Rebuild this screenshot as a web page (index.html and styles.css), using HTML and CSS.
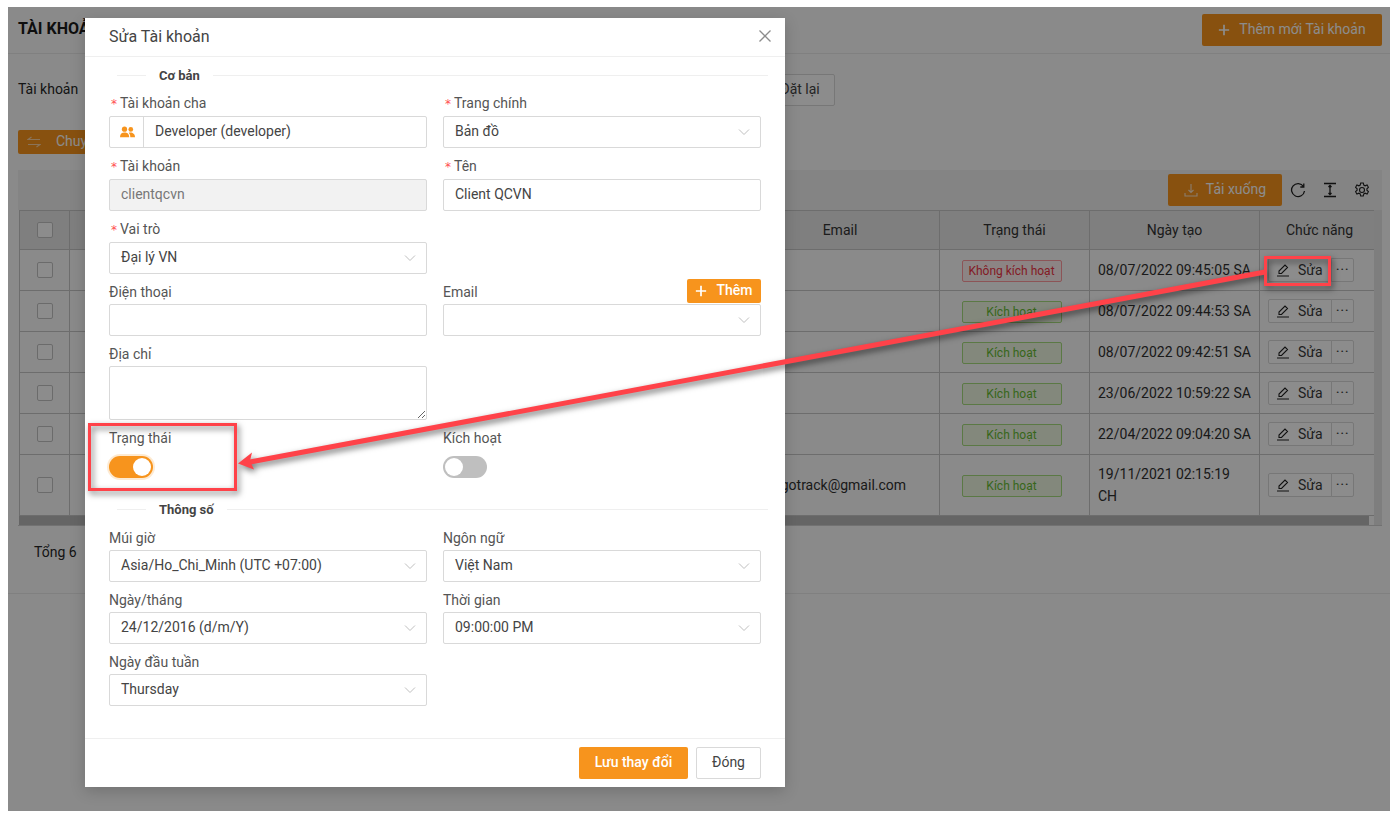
FILE: index.html
```html
<!DOCTYPE html>
<html lang="vi">
<head>
<meta charset="utf-8">
<title>Sửa Tài khoản</title>
<link rel="stylesheet" href="styles.css">
</head>
<body>
<div class="screen">
  <header class="page-head">
    <h1 class="page-title">TÀI KHOẢN</h1>
    <button class="btn btn-primary btn-add"><svg class="ic-plus" viewBox="0 0 14 14"><path d="M7 1v12M1 7h12"/></svg>Thêm mới Tài khoản</button>
  </header>
  <div class="filter">
    <span class="filter-label">Tài khoản</span>
    <span class="filter-input"></span>
    <button class="btn btn-plain btn-reset">Đặt lại</button>
  </div>
  <div class="actions">
    <button class="btn btn-primary btn-move"><svg class="ic-swap" viewBox="0 0 14 12"><path d="M13 3.500H1L4.500 1M1 8.500h12L9.500 11"/></svg>Chuyển</button>
  </div>
  <div class="toolbar">
    <button class="btn btn-primary btn-download"><svg class="ic-down" viewBox="0 0 14 14"><path d="M7 1v8M4.500 7 7 9.500 9.500 7M1 10v3h12v-3"/></svg>Tải xuống</button>
    <svg class="tool" viewBox="0 0 16 16"><path d="M13.500 4.500A6.500 6.500 0 1 0 14.500 9M13.800 1.500v3.500h-3.500"/></svg>
    <svg class="tool" viewBox="0 0 16 16"><path d="M2 1.500h12M2 14.500h12M8 3.500v9M6.500 5 8 3.500 9.500 5M6.500 11 8 12.500 9.500 11"/></svg>
    <svg class="tool tool-gear" viewBox="0 0 16 16"><path d="M6.700 1h2.600l.5 2.100 1.300.7 2-.8 1.300 2.300-1.500 1.500v1.400l1.500 1.500-1.300 2.300-2-.8-1.300.7-.5 2.100H6.700l-.5-2.100-1.300-.7-2 .8-1.300-2.300 1.500-1.500V6.800L1.600 5.300 2.900 3l2 .8 1.300-.7z"/><circle cx="8" cy="8" r="2.500"/></svg>
  </div>
  <div class="table-area">
    <div class="table-main">
      <table class="grid">
        <colgroup><col class="c1"><col class="c2"><col class="c3"><col class="c4"><col class="c5"><col class="c6"></colgroup>
        <thead>
          <tr><th><span class="check"></span></th><th></th><th>Email</th><th>Trạng thái</th><th>Ngày tạo</th><th class="th-act">Chức năng</th></tr>
        </thead>
        <tbody>
          <tr><td class="mid"><span class="check"></span></td><td></td><td></td><td class="mid"><span class="tag tag-off">Không kích hoạt</span></td><td>08/07/2022 09:45:05 SA</td><td class="act"><span class="group"><span class="g-edit"><svg class="ic-pen" viewBox="0 0 14 14"><path d="M1 13h12M3 10.500v-2.500l6-6 2.500 2.500-6 6z"/></svg>Sửa</span><span class="g-more">···</span></span></td></tr>
          <tr><td class="mid"><span class="check"></span></td><td></td><td></td><td class="mid"><span class="tag tag-on">Kích hoạt</span></td><td>08/07/2022 09:44:53 SA</td><td class="act"><span class="group"><span class="g-edit"><svg class="ic-pen" viewBox="0 0 14 14"><path d="M1 13h12M3 10.500v-2.500l6-6 2.500 2.500-6 6z"/></svg>Sửa</span><span class="g-more">···</span></span></td></tr>
          <tr><td class="mid"><span class="check"></span></td><td></td><td></td><td class="mid"><span class="tag tag-on">Kích hoạt</span></td><td>08/07/2022 09:42:51 SA</td><td class="act"><span class="group"><span class="g-edit"><svg class="ic-pen" viewBox="0 0 14 14"><path d="M1 13h12M3 10.500v-2.500l6-6 2.500 2.500-6 6z"/></svg>Sửa</span><span class="g-more">···</span></span></td></tr>
          <tr><td class="mid"><span class="check"></span></td><td></td><td></td><td class="mid"><span class="tag tag-on">Kích hoạt</span></td><td>23/06/2022 10:59:22 SA</td><td class="act"><span class="group"><span class="g-edit"><svg class="ic-pen" viewBox="0 0 14 14"><path d="M1 13h12M3 10.500v-2.500l6-6 2.500 2.500-6 6z"/></svg>Sửa</span><span class="g-more">···</span></span></td></tr>
          <tr><td class="mid"><span class="check"></span></td><td></td><td></td><td class="mid"><span class="tag tag-on">Kích hoạt</span></td><td>22/04/2022 09:04:20 SA</td><td class="act"><span class="group"><span class="g-edit"><svg class="ic-pen" viewBox="0 0 14 14"><path d="M1 13h12M3 10.500v-2.500l6-6 2.500 2.500-6 6z"/></svg>Sửa</span><span class="g-more">···</span></span></td></tr>
          <tr class="tall"><td class="mid"><span class="check"></span></td><td></td><td>dogogotrack@gmail.com</td><td class="mid"><span class="tag tag-on">Kích hoạt</span></td><td>19/11/2021 02:15:19 CH</td><td class="act"><span class="group"><span class="g-edit"><svg class="ic-pen" viewBox="0 0 14 14"><path d="M1 13h12M3 10.500v-2.500l6-6 2.500 2.500-6 6z"/></svg>Sửa</span><span class="g-more">···</span></span></td></tr>
        </tbody>
      </table>
      <div class="hbar"></div>
    </div>
    <div class="vbar"></div>
  </div>
  <div class="total">Tổng 6</div>

  <div class="overlay">
    <section class="modal">
      <div class="modal-head">
        <h2 class="modal-title">Sửa Tài khoản</h2>
        <svg class="ic-close" viewBox="0 0 14 14"><path d="M1.500 1.500l11 11M12.500 1.500l-11 11"/></svg>
      </div>
      <div class="modal-body">
        <div class="legend"><span>Cơ bản</span></div>
        <div class="form">
          <div class="field req"><label class="lab">Tài khoản cha</label>
            <div class="ctl addon"><span class="addon-ic"><svg class="ic-team" viewBox="0 0 16 12"><circle cx="4.800" cy="3" r="2.800"/><circle cx="11.500" cy="3.200" r="2.500"/><path d="M0 11.500c0-3.500 2-5 4.800-5s5 1.500 5 5zM11 11.500c0-2-.5-3.500-1.700-4.700 2.900-1 6.700.3 6.700 4.700z"/></svg></span><span class="addon-text">Developer (developer)</span></div>
          </div>
          <div class="field req"><label class="lab">Trang chính</label>
            <div class="ctl sel">Bản đồ<svg class="chev" viewBox="0 0 12 8"><path d="M1 1.500l5 5 5-5"/></svg></div>
          </div>
          <div class="field req"><label class="lab">Tài khoản</label>
            <div class="ctl off">clientqcvn</div>
          </div>
          <div class="field req"><label class="lab">Tên</label>
            <div class="ctl">Client QCVN</div>
          </div>
          <div class="field req"><label class="lab">Vai trò</label>
            <div class="ctl sel">Đại lý VN<svg class="chev" viewBox="0 0 12 8"><path d="M1 1.500l5 5 5-5"/></svg></div>
          </div>
          <div class="field"></div>
          <div class="field"><label class="lab">Điện thoại</label>
            <div class="ctl"></div>
          </div>
          <div class="field field-email"><label class="lab">Email</label>
            <button class="btn btn-primary btn-them"><svg class="ic-plus" viewBox="0 0 14 14"><path d="M7 1v12M1 7h12"/></svg>Thêm</button>
            <div class="ctl sel"><svg class="chev" viewBox="0 0 12 8"><path d="M1 1.500l5 5 5-5"/></svg></div>
          </div>
          <div class="field"><label class="lab">Địa chỉ</label>
            <textarea class="area"></textarea>
          </div>
          <div class="field"></div>
          <div class="field"><label class="lab">Trạng thái</label>
            <span class="switch on"><span class="knob"></span></span>
          </div>
          <div class="field"><label class="lab">Kích hoạt</label>
            <span class="switch"><span class="knob"></span></span>
          </div>
        </div>
        <div class="legend legend-2"><span>Thông số</span></div>
        <div class="form">
          <div class="field"><label class="lab">Múi giờ</label>
            <div class="ctl sel">Asia/Ho_Chi_Minh (UTC +07:00)<svg class="chev" viewBox="0 0 12 8"><path d="M1 1.500l5 5 5-5"/></svg></div>
          </div>
          <div class="field"><label class="lab">Ngôn ngữ</label>
            <div class="ctl sel">Việt Nam<svg class="chev" viewBox="0 0 12 8"><path d="M1 1.500l5 5 5-5"/></svg></div>
          </div>
          <div class="field"><label class="lab">Ngày/tháng</label>
            <div class="ctl sel">24/12/2016 (d/m/Y)<svg class="chev" viewBox="0 0 12 8"><path d="M1 1.500l5 5 5-5"/></svg></div>
          </div>
          <div class="field"><label class="lab">Thời gian</label>
            <div class="ctl sel">09:00:00 PM<svg class="chev" viewBox="0 0 12 8"><path d="M1 1.500l5 5 5-5"/></svg></div>
          </div>
          <div class="field"><label class="lab">Ngày đầu tuần</label>
            <div class="ctl sel">Thursday<svg class="chev" viewBox="0 0 12 8"><path d="M1 1.500l5 5 5-5"/></svg></div>
          </div>
        </div>
      </div>
      <div class="modal-foot">
        <button class="btn btn-primary btn-save">Lưu thay đổi</button>
        <button class="btn btn-plain btn-close">Đóng</button>
      </div>
    </section>
  </div>
</div>
<svg class="notes" viewBox="0 0 1396 814">
  <g class="note-shape">
    <rect class="note-box" x="1265.500" y="257.500" width="64" height="27"/>
    <rect class="note-box" x="89.500" y="424.500" width="146" height="65"/>
    <path class="note-line" d="M1265 272 250 462"/>
    <path class="note-head" d="M238 463.500 252 452.500 250 461 254 469.500z"/>
  </g>
</svg>
</body>
</html>
```
FILE: styles.css
```css
* { box-sizing: border-box; }
html, body { margin: 0; height: 100%; }
body {
  position: relative;
  width: 1396px;
  height: 814px;
  overflow: hidden;
  background: #fff;
  font-family: Roboto, "Noto Sans", sans-serif;
  font-size: 14px;
  color: #262626;
}
button { font: inherit; cursor: pointer; }
.screen {
  position: relative;
  width: 1382px;
  height: 804px;
  margin: 7px 6px 3px 8px;
  background: #fcfcfc;
  overflow: hidden;
}
.btn {
  display: inline-flex;
  align-items: center;
  justify-content: center;
  border-radius: 2px;
  border: 1px solid transparent;
  padding: 0 0 2px;
}
.btn-primary { background: #f7941d; color: #fff; font-weight: 500; }
.btn-plain { background: #fff; border-color: #d9d9d9; color: #444; }
.ic-plus { width: 12px; height: 12px; margin-top: 2px; fill: none; stroke: currentColor; stroke-width: 2; }
.page-head {
  height: 47px;
  padding: 7px 8px 0 10px;
  display: flex;
  justify-content: space-between;
  border-bottom: 1px solid #e9e9e9;
}
.page-title { margin: 5px 0 0; font-size: 16px; font-weight: 700; line-height: 20px; color: #1a1a1a; }
.btn-add { width: 180px; height: 32px; font-weight: 400; color: #fff; gap: 9px; }
.filter { display: flex; align-items: center; margin: 20px 0 0 10px; height: 32px; }
.filter-label { flex: none; width: 60px; white-space: nowrap; padding-bottom: 2px; }
.filter-input { flex: none; width: 667px; height: 32px; margin: 0 10px; border: 1px solid #d9d9d9; background: #fff; }
.btn-reset { width: 70px; height: 32px; flex: none; }
.actions { margin: 24px 0 0 10px; height: 24px; display: flex; }
.btn-move { width: 110px; height: 24px; font-weight: 400; gap: 15px; justify-content: flex-start; padding-left: 8px; }
.ic-swap { width: 14px; height: 12px; margin-top: 2px; fill: none; stroke: #fff; stroke-width: 1.200; opacity: .6; }
.toolbar {
  margin: 16px 8px 0 10px;
  height: 40px;
  background: #f0f0f0;
  display: flex;
  align-items: center;
  justify-content: flex-end;
  padding-right: 12px;
  gap: 16px;
}
.btn-download { width: 114px; height: 32px; margin-right: -8px; gap: 8px; font-weight: 400; }
.ic-down { width: 14px; height: 14px; margin-top: 2px; fill: none; stroke: #fff; stroke-width: 1.100; opacity: .75; }
.tool { width: 16px; height: 16px; fill: none; stroke: #1f1f1f; stroke-width: 1.300; }
.tool-gear { stroke-width: 1.100; }
.table-area {
  margin: 0 8px 0 10px;
  display: flex;
  border-bottom: 1px solid #d0d0d0;
  padding-left: 1px;
}
.table-main { width: 1355px; }
.vbar { width: 8px; background: #e6e6e6; }
.grid { width: 1355px; table-layout: fixed; border-collapse: collapse; }
.c1 { width: 50px; }
.c2 { width: 671px; }
.c3 { width: 199px; }
.c4 { width: 150px; }
.c5 { width: 170px; }
.c6 { width: 115px; }
.grid th, .grid td { border: 1px solid #c6c6c6; }
.grid th {
  height: 39px;
  background: #e8e8e8;
  font-weight: 400;
  text-align: center;
  color: #333;
  padding: 0 8px;
}
.grid th.th-act { padding-left: 13px; }
.grid td { height: 41px; padding: 0 8px; line-height: 22px; color: #303030; background: #fbfbfb; }
.grid .tall td { height: 61px; }
.grid td.mid { text-align: center; }
.check {
  display: block;
  width: 16px;
  height: 16px;
  margin: 0 auto;
  border: 1px solid #c4c4c4;
  border-radius: 2px;
  background: #fff;
}
.tag {
  display: inline-block;
  width: 100px;
  height: 22px;
  margin-right: 6px;
  line-height: 20px;
  font-size: 12px;
  border-radius: 2px;
  border: 1px solid;
  vertical-align: middle;
  white-space: nowrap;
}
.tag-off { color: #ee3344; background: #fff1f0; border-color: #ff9a9e; }
.tag-on { color: #66bb33; background: #eef8e2; border-color: #a6dc7e; }
.act { padding-left: 8px !important; }
.group { display: inline-flex; height: 24px; vertical-align: middle; font-size: 14px; }
.g-edit {
  width: 64px;
  display: flex;
  align-items: center;
  justify-content: flex-start;
  gap: 8px;
  padding-left: 7px;
  background: #fff;
  border: 1px solid #d9d9d9;
  border-radius: 2px 0 0 2px;
  color: #3a3a3a;
}
.g-more {
  width: 23px;
  display: flex;
  align-items: center;
  justify-content: center;
  margin-left: -1px;
  font-size: 15px;
  letter-spacing: .5px;
  background: #fff;
  border: 1px solid #d9d9d9;
  border-radius: 0 2px 2px 0;
  color: #3a3a3a;
}
.ic-pen { width: 14px; height: 14px; fill: none; stroke: #1f1f1f; stroke-width: 1.100; flex: none; }
.hbar { height: 9px; background: #b8b8b8; width: 1350px; }
.total { margin: 15px 0 0 26px; height: 22px; line-height: 22px; }
.total::after {
  content: "";
  display: block;
  margin: 30px 0 0 -26px;
  border-top: 1px solid #e9e9e9;
}
.overlay { position: absolute; inset: 0; background: rgba(0, 0, 0, .45); }
.modal {
  position: absolute;
  left: 77px;
  top: 11px;
  width: 700px;
  height: 769px;
  display: flex;
  flex-direction: column;
  background: #fff;
  box-shadow: 0 4px 14px rgba(0, 0, 0, .18);
}
.modal-head {
  height: 39px;
  flex: none;
  padding: 0 13px 2px 24px;
  display: flex;
  align-items: center;
  justify-content: space-between;
  border-bottom: 1px solid #efefef;
}
.modal-title { margin: 0; font-size: 16px; font-weight: 400; color: #444; }
.ic-close { width: 14px; height: 14px; fill: none; stroke: #8c8c8c; stroke-width: 1.300; }
.modal-body { flex: 1; padding: 9px 24px 0; min-height: 0; }
.legend {
  display: flex;
  align-items: center;
  height: 18px;
  margin: 0 -7px 8px 8px;
  font-size: 13px;
  font-weight: 700;
  color: #444;
  gap: 13px;
}
.legend::before { content: ""; width: 29px; border-top: 1px solid #efefef; }
.legend::after { content: ""; flex: 1; border-top: 1px solid #efefef; }
.legend-2 { margin-bottom: 9px; }
.form { display: grid; grid-template-columns: 318px 318px; column-gap: 16px; }
.field { position: relative; margin-bottom: 7px; }
.lab { display: block; height: 22px; line-height: 22px; margin-bottom: 1px; color: #555; white-space: nowrap; }
.req .lab { margin-bottom: 2px; }
.req .lab::before {
  content: "*";
  display: inline-block;
  box-sizing: border-box;
  width: 11px;
  color: #ff4d4f;
  font-family: "DejaVu Sans", sans-serif;
  font-size: 12px;
  padding-left: 2px;
}
.ctl {
  position: relative;
  height: 32px;
  line-height: 28px;
  padding: 0 11px;
  border: 1px solid #d9d9d9;
  border-radius: 2px;
  background: #fff;
  color: #444;
  white-space: nowrap;
}
.off { background: #f2f2f2; color: #777; }
.addon { display: flex; padding: 0; }
.addon-ic { width: 34px; display: flex; align-items: center; justify-content: center; padding-left: 2px; border-right: 1px solid #d9d9d9; }
.ic-team { width: 15px; height: 12px; fill: #f7941d; }
.addon-text { padding-left: 11px; }
.chev { position: absolute; right: 10px; top: 11px; width: 12px; height: 8px; fill: none; stroke: #bfbfbf; stroke-width: 1; }
.btn-them {
  position: absolute;
  right: 0;
  top: -2px;
  width: 74px;
  height: 24px;
  gap: 9px;
  font-weight: 500;
}
.area {
  display: block;
  width: 318px;
  height: 54px;
  border: 1px solid #d9d9d9;
  border-radius: 2px;
  background: #fff;
  margin: 0;
}
.switch {
  display: block;
  position: relative;
  width: 44px;
  height: 22px;
  margin-top: 7px;
  margin-bottom: 15px;
  border-radius: 11px;
  background: #bfbfbf;
}
.switch.on { background: #f7941d; box-shadow: 0 0 0 2px rgba(247, 148, 29, .2); }
.knob {
  position: absolute;
  left: 2px;
  top: 2px;
  width: 18px;
  height: 18px;
  border-radius: 50%;
  background: #fff;
}
.switch.on .knob { left: 24px; }
.modal-foot {
  height: 49px;
  flex: none;
  border-top: 1px solid #efefef;
  display: flex;
  justify-content: flex-end;
  align-items: center;
  padding: 0 24px;
  gap: 8px;
}
.btn-save { width: 109px; height: 32px; }
.btn-close { width: 65px; height: 32px; }
.notes { position: absolute; left: 0; top: 0; width: 1396px; height: 814px; pointer-events: none; }
.note-shape { filter: drop-shadow(2px 3px 3px rgba(0, 0, 0, .55)); }
.note-box { fill: none; stroke: #ff4249; stroke-width: 3; }
.note-line { fill: none; stroke: #ff4249; stroke-width: 5; }
.note-head { fill: #ff4249; }
```
